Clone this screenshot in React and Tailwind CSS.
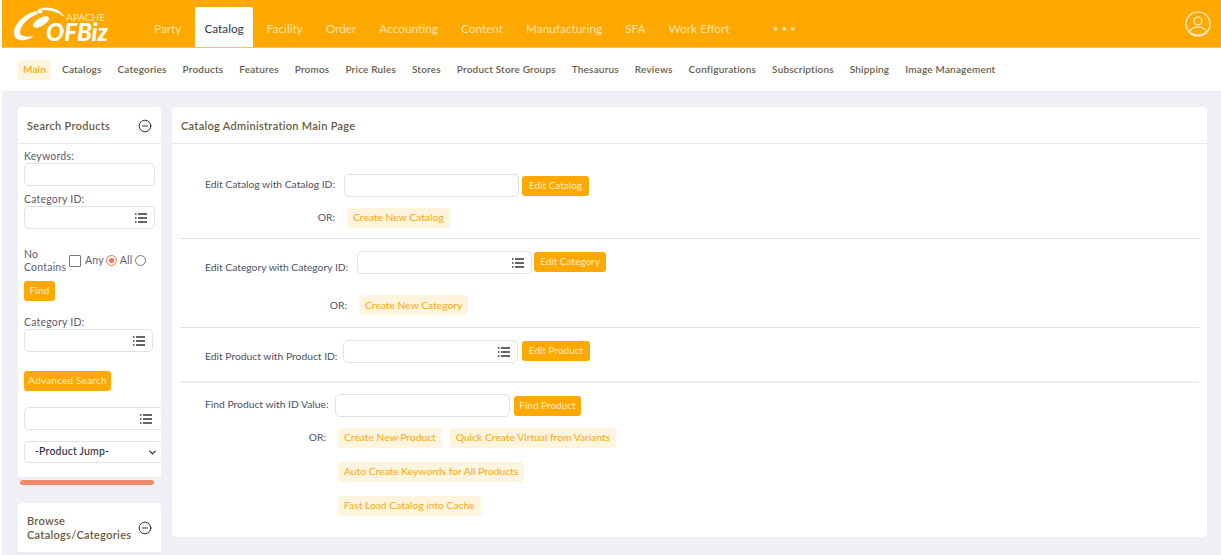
import React from 'react';
import { CircleMinus, ChevronDown } from 'lucide-react';

const font = "[font-family:Lato,'Open_Sans',sans-serif]";

const topLinks = ['Party', 'Catalog', 'Facility', 'Order', 'Accounting', 'Content', 'Manufacturing', 'SFA', 'Work Effort'];
const subLinks = ['Main', 'Catalogs', 'Categories', 'Products', 'Features', 'Promos', 'Price Rules', 'Stores', 'Product Store Groups', 'Thesaurus', 'Reviews', 'Configurations', 'Subscriptions', 'Shipping', 'Image Management'];

function ListIcon() {
  return (
    <svg width="12" height="10" viewBox="0 0 12 10" className="shrink-0 text-[#333]">
      <path d="M0 1h1.5M0 5h1.5M0 9h1.5M3 1h9M3 5h9M3 9h9" stroke="currentColor" strokeWidth="1.3" fill="none" />
    </svg>
  );
}

function Lookup({ className = '', list = false }) {
  return (
    <div className={`flex h-[23px] items-center justify-end rounded-[5px] border border-[#dfe1e8] bg-white pr-[7px] ${className}`}>
      {list && <ListIcon />}
    </div>
  );
}

function Solid({ children, className = '' }) {
  return (
    <button className={`flex h-5 items-center justify-center rounded-[3px] bg-[#ffa800] pb-[1px] text-[10px] whitespace-nowrap text-[#ffeccb] ${className}`}>
      {children}
    </button>
  );
}

function Soft({ children }) {
  return (
    <button className="flex h-5 items-center rounded-[3px] bg-[#fff4de] px-[6px] text-[10.3px] whitespace-nowrap text-[#ffa800]">
      {children}
    </button>
  );
}

function Label({ children, className = '' }) {
  return <div className={`text-right text-[10.3px] whitespace-nowrap text-[#4c5066] ${className}`}>{children}</div>;
}

function Radio({ on }) {
  return (
    <span className={`flex size-[11px] shrink-0 items-center justify-center rounded-full border ${on ? 'border-[#f0764a]' : 'border-[#777]'}`}>
      {on && <span className="size-[5px] rounded-full bg-[#f0764a]" />}
    </span>
  );
}

function Sidebar() {
  return (
    <aside className="w-[143px] shrink-0">
      <div className="overflow-hidden rounded-t-[4px] bg-white pb-[14px]">
        <div className="flex h-[37px] items-center justify-between border-b border-[#e8e9ee] px-[9px]">
          <div className="pt-[3px] text-[11px] font-semibold tracking-[0.3px] text-[#6a5a42]">Search Products</div>
          <CircleMinus size={14} strokeWidth={1.6} className="mt-[1px] text-[#222]" />
        </div>
        <div className="px-[6px] text-[10.5px] tracking-[0.2px] text-[#5a5d70]">
          <div className="mt-[6px] h-[13px] leading-[13px]">Keywords:</div>
          <Lookup className="w-[131px]" />
          <div className="mt-[6px] h-[14px] leading-[14px]">Category ID:</div>
          <Lookup className="w-[131px]" list />
          <div className="mt-[19px] flex items-center gap-[3px]">
            <div className="w-[44px] leading-[12.5px]">No<br />Contains</div>
            <span className="-ml-[2px] size-[12px] shrink-0 rounded-[1px] border border-[#777]" />
            <span className="ml-[1px]">Any</span>
            <span className="-ml-[1px]"><Radio on /></span>
            <span>All</span>
            <Radio />
          </div>
          <Solid className="mt-[8px] w-[31px]">Find</Solid>
          <div className="mt-[15px] h-[13px] leading-[13px]">Category ID:</div>
          <Lookup className="w-[129px]" list />
          <Solid className="mt-[19px] w-[87px]">Advanced Search</Solid>
          <Lookup className="mt-[16px] w-[140px] pr-[11px]" list />
          <div className="mt-[11px] flex h-[22px] w-[140px] items-center justify-between rounded-[5px] border border-[#dfe1e8] pr-[5px] pl-[10px] text-[10.5px] font-medium text-[#2c2f3d]">
            -Product Jump-
            <ChevronDown size={11} strokeWidth={2.4} className="text-[#222]" />
          </div>
        </div>
      </div>
      <div className="mx-[2px] mt-[3px] h-[5px] w-[134px] rounded-full bg-[#ef8b6b]" />
      <div className="mt-[18px] rounded-t-[4px] bg-white">
        <div className="flex h-[50px] items-center justify-between border-b border-[#e8e9ee] px-[9px]">
          <div className="text-[11px] leading-[14px] font-semibold tracking-[0.3px] text-[#6a5a42]">Browse<br />Catalogs/Categories</div>
          <CircleMinus size={14} strokeWidth={1.6} className="text-[#222]" />
        </div>
      </div>
    </aside>
  );
}

function Main() {
  return (
    <main className="h-[430px] flex-1 rounded-[4px] bg-white">
      <div className="flex h-[37px] items-center border-b border-[#e8e9ee] pt-[3px] pl-[9px] text-[11px] font-semibold tracking-[0.3px] text-[#6a5a42]">
        Catalog Administration Main Page
      </div>
      <div className="px-[8px]">
        <section className="h-[95px] border-b border-[#dfe1e6] pt-[30px] pl-[25px]">
          <div className="flex items-center">
            <Label className="w-[130px] pb-[2px]">Edit Catalog with Catalog ID:</Label>
            <Lookup className="ml-[9px] w-[175px]" />
            <Solid className="ml-[3px] w-[67px]">Edit Catalog</Solid>
          </div>
          <div className="mt-[11px] flex items-center">
            <Label className="w-[130px]">OR:</Label>
            <div className="ml-[12px]"><Soft>Create New Catalog</Soft></div>
          </div>
        </section>
        <section className="h-[89px] border-b border-[#dfe1e6] pt-[12px] pl-[25px]">
          <div className="flex items-start">
            <Label className="mt-[9px] w-[142px]">Edit Category with Category ID:</Label>
            <Lookup className="ml-[10px] w-[175px]" list />
            <Solid className="mt-[1px] ml-[2px] w-[72px]">Edit Category</Solid>
          </div>
          <div className="mt-[20px] flex items-center">
            <Label className="w-[142px]">OR:</Label>
            <div className="ml-[12px]"><Soft>Create New Category</Soft></div>
          </div>
        </section>
        <section className="h-[55px] border-b-2 border-[#eceef2] pt-[12px] pl-[25px]">
          <div className="flex items-start">
            <Label className="mt-[9px] w-[129px]">Edit Product with Product ID:</Label>
            <Lookup className="ml-[9px] w-[175px]" list />
            <Solid className="mt-[1px] ml-[4px] w-[68px]">Edit Product</Solid>
          </div>
        </section>
        <section className="pt-[11px] pl-[25px]">
          <div className="flex items-center">
            <Label className="w-[121px] pb-[1px]">Find Product with ID Value:</Label>
            <Lookup className="ml-[9px] w-[175px]" />
            <Solid className="ml-[4px] w-[67px]">Find Product</Solid>
          </div>
          <div className="mt-[11px] flex">
            <Label className="mt-[2px] w-[121px]">OR:</Label>
            <div className="ml-[12px] flex flex-col items-start gap-[14px]">
              <div className="flex gap-[8px]">
                <Soft>Create New Product</Soft>
                <Soft>Quick Create Virtual from Variants</Soft>
              </div>
              <Soft>Auto Create Keywords for All Products</Soft>
              <Soft>Fast Load Catalog into Cache</Soft>
            </div>
          </div>
        </section>
      </div>
    </main>
  );
}

export default function App() {
  return (
    <div className={`h-[555px] w-[1221px] overflow-hidden bg-white pl-[2px] ${font}`}>
      <header className="flex h-[48px] items-end border-b border-[#ffc04d] bg-[#ffa800] pr-[10px] pl-[12px]">
        <div className="relative h-[40px] w-[131px] self-center">
          <svg width="54" height="36" viewBox="0 0 54 36" className="absolute top-[2px] left-0 text-white">
            <path d="M22 5C10 8 0 18 0 27c0 6 5 8 11 7 4-1 7-2 9-4-6 1-14 1-14-4 0-6 8-15 18-18z" fill="currentColor" />
            <ellipse cx="27" cy="16" rx="9" ry="4" transform="rotate(-30 27 16)" fill="currentColor" />
            <circle cx="26" cy="5" r="2.500" fill="currentColor" />
            <path d="M27 2c9-2 20 1 24 10-4-5-13-8-22-8z" fill="currentColor" />
          </svg>
          <span className="absolute top-[8px] left-[52px] text-[10px] leading-[10px] text-[#ffe9bd]">APACHE</span>
          <span className="absolute top-[18px] left-[32px] text-[24px] leading-[20px] font-black text-white italic">OFBiz</span>
        </div>
        <nav className="flex flex-1 items-end gap-[5px]">
          {topLinks.map((link) => (
            <a
              key={link}
              className={`flex h-[40px] items-center rounded-t-[3px] px-[9px] pt-[4px] text-[11.8px] ${
                link === 'Catalog' ? 'bg-white text-[#34384d]' : 'text-[#ffe3a8]'
              }`}
            >
              {link}
            </a>
          ))}
          <span className="flex h-[40px] items-center pt-[2px] pl-[29px] text-[10px] tracking-[3px] text-[#ffe3a8]">•••</span>
        </nav>
        <svg width="26" height="26" viewBox="0 0 26 26" fill="none" stroke="#fff3dc" strokeWidth="1.2" className="mb-[10px] shrink-0">
          <circle cx="13" cy="13" r="12" />
          <circle cx="13" cy="10" r="4" />
          <path d="M4.500 21c1.500-3.500 5-5 8.500-5s7 1.500 8.500 5c-2 2-5 3-8.500 3s-6.500-1-8.500-3z" />
        </svg>
      </header>
      <div className="flex h-[43px] items-center gap-[6px] pl-[16px] text-[10px] font-semibold tracking-[0.18px] text-[#6a5d49]">
        {subLinks.map((link) => (
          <a
            key={link}
            className={`flex h-[20px] items-center rounded-[3px] px-[5px] whitespace-nowrap ${link === 'Main' ? 'bg-[#fff4de] text-[#ffa800]' : ''}`}
          >
            {link}
          </a>
        ))}
      </div>
      <div className="flex h-[464px] gap-[11px] bg-[#eef0f6] pt-[16px] pr-[14px] pl-[16px]">
        <Sidebar />
        <Main />
      </div>
    </div>
  );
}
